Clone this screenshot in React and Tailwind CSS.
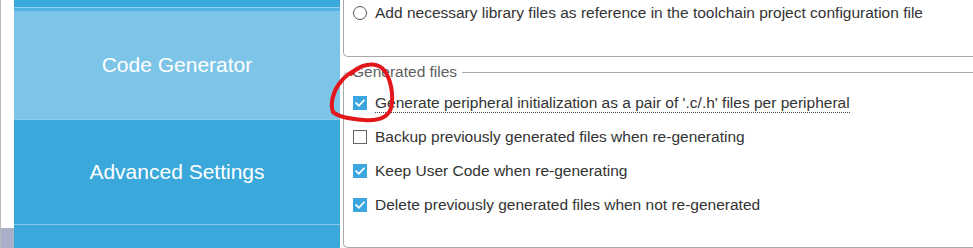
import React from "react";

const Check = () => (
  <span className="w-[14px] h-[14px] bg-[#3ba6e0] flex items-center justify-center shrink-0">
    <svg width="12" height="12" viewBox="0 0 12 12" fill="none">
      <path d="M2.2 6.2 L4.9 8.8 L9.8 3.4" stroke="#fff" strokeWidth="1.8" strokeLinecap="square" />
    </svg>
  </span>
);

const Box = () => <span className="w-[14px] h-[14px] border border-[#666] bg-white shrink-0" />;

const Row = ({ checked, children, dotted }) => (
  <div className="h-[34px] flex items-center">
    {checked ? <Check /> : <Box />}
    <span
      className={`ml-[8px] leading-[18px] ${dotted ? "border-b border-dotted border-[#444]" : ""}`}
    >
      {children}
    </span>
  </div>
);

export default function App() {
  return (
    <div className="relative w-[973px] h-[248px] overflow-hidden bg-white flex font-['Liberation_Sans',Arial,sans-serif]">
      {/* Left gutter */}
      <div className="w-[14px] flex flex-col border-l border-[#b8b8b8]">
        <div className="flex-1" />
        <div className="h-[20px] bg-[#a9b0c9]" />
      </div>

      {/* Sidebar */}
      <div className="w-[326px] flex flex-col text-white text-[21px]">
        <div className="h-[7px] bg-[#39a8da]" />
        <div className="h-[1px] bg-[#8fd0ee]" />
        <div className="h-[3px] bg-[#52b2df]" />
        <div className="h-[108px] bg-[#7dc5e8] flex items-center justify-center">Code Generator</div>
        <div className="h-[1px] bg-[#8ccdec]" />
        <div className="h-[104px] bg-[#3aa8db] flex items-center justify-center">Advanced Settings</div>
        <div className="h-[1px] bg-[#86caea]" />
        <div className="flex-1 bg-[#3aa8db]" />
      </div>

      {/* Right panel */}
      <div className="ml-[3px] flex-1 flex flex-col text-[15.5px] text-[#333]">
        <div className="h-[57px] border-l border-b border-[#a8a8a8] rounded-bl-[5px] pt-[4px] pl-[9px]">
          <div className="h-[18px] flex items-center">
            <span className="w-[14px] h-[14px] rounded-full border border-[#555] bg-white shrink-0" />
            <span className="ml-[8px] leading-[18px]">
              Add necessary library files as reference in the toolchain project configuration file
            </span>
          </div>
        </div>

        <fieldset className="mt-[6px] flex-1 border border-r-0 border-[#a8a8a8] rounded-l-[5px]">
          <legend className="ml-[3px] px-[5px] leading-[18px] text-[#5f5f5f]">Generated files</legend>
          <div className="pl-[9px] pt-[5px]">
            <Row checked dotted>
              Generate peripheral initialization as a pair of '.c/.h' files per peripheral
            </Row>
            <Row>Backup previously generated files when re-generating</Row>
            <Row checked>Keep User Code when re-generating</Row>
            <Row checked>Delete previously generated files when not re-generated</Row>
          </div>
        </fieldset>
      </div>

      {/* Red hand-drawn annotation */}
      <svg
        className="absolute left-0 top-0 pointer-events-none"
        width="973"
        height="248"
        viewBox="0 0 973 248"
        fill="none"
      >
        <path
          d="M351 74 C360 64 374 62 382 68 C391 76 394 96 391 108 C388 118 378 121 364 120 C350 119 338 117 333 112 C330 104 333 92 339 84 C344 77 350 72 358 69"
          stroke="#e3161b"
          strokeWidth="4"
          strokeLinecap="round"
          strokeLinejoin="round"
        />
      </svg>
    </div>
  );
}
